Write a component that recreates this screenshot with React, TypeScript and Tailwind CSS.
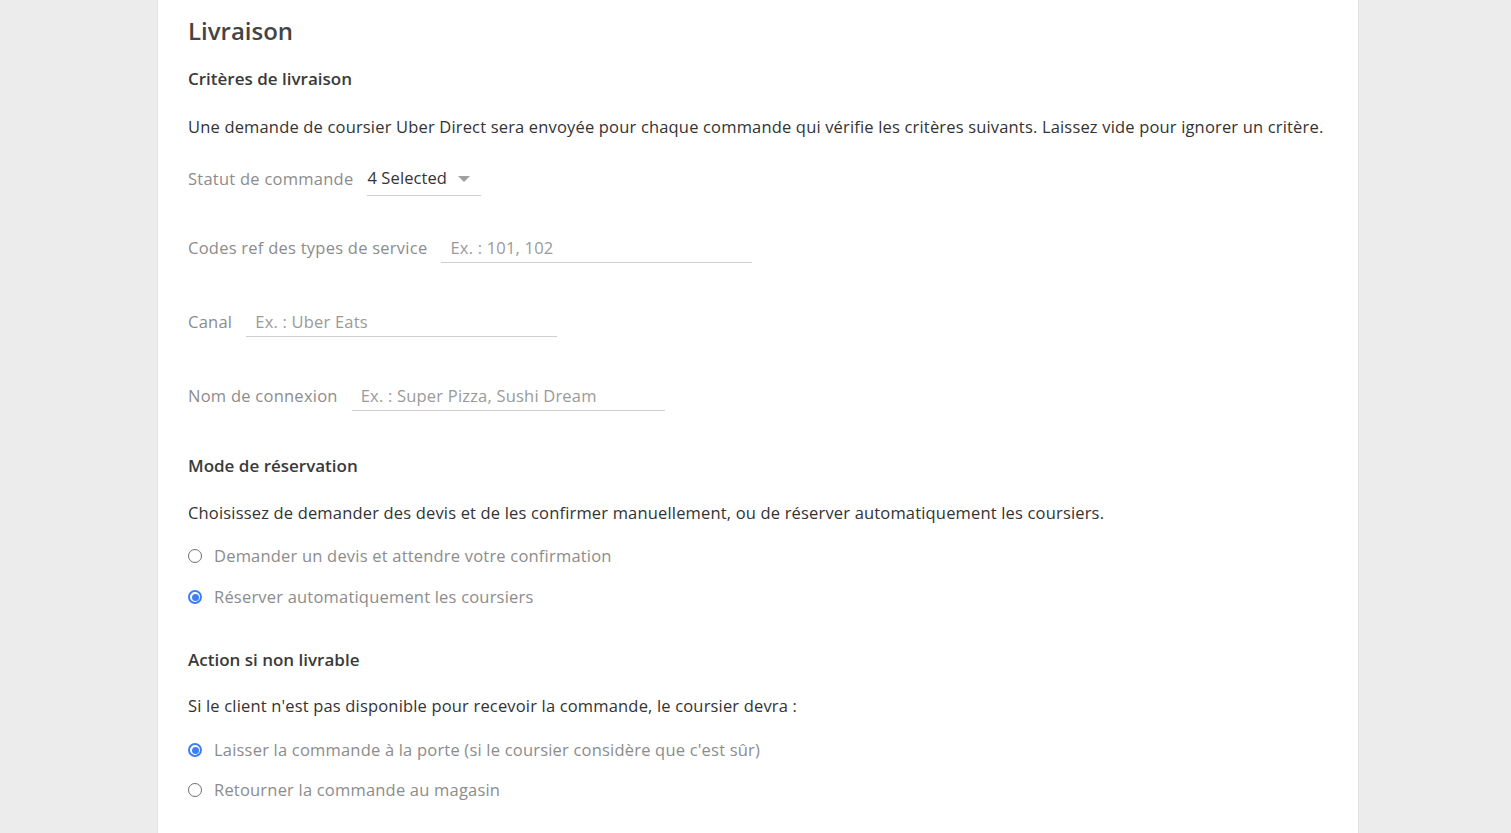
import React from "react";

const font = { fontFamily: '"Open Sans", "Noto Sans", sans-serif' };

function Radio({ checked, label }: { checked: boolean; label: string }) {
  return (
    <label className="flex items-center gap-[12px] text-[16.5px] tracking-[0.2px] text-[#8c8c8c] leading-[24px]">
      {checked ? (
        <span className="w-[14px] h-[14px] rounded-full border-2 border-[#3d7ef5] flex items-center justify-center shrink-0">
          <span className="w-[7px] h-[7px] rounded-full bg-[#3d7ef5]" />
        </span>
      ) : (
        <span className="w-[14px] h-[14px] rounded-full border border-[#6f6f6f] shrink-0" />
      )}
      <span>{label}</span>
    </label>
  );
}

function Field({ label, placeholder, width }: { label: string; placeholder: string; width: string }) {
  return (
    <div className="flex items-center gap-[14px] h-[30px]">
      <span className="text-[16.5px] tracking-[0.25px] text-[#8c8c8c]">{label}</span>
      <div className={`${width} h-[30px] border-b border-[#cfcfcf] flex items-center pt-[2px] px-[9px] text-[16.5px] tracking-[0.2px] text-[#9a9a9a]`}>
        {placeholder}
      </div>
    </div>
  );
}

export default function App() {
  return (
    <div className="min-h-[833px] bg-[#ececec] flex" style={font}>
      <div className="ml-[157px] w-[1202px] bg-white border-x border-[#e2e2e2] px-[30px] pt-[14px] pb-[30px]">
        <h2 className="text-[24px] font-semibold text-[#444] leading-[34px]">Livraison</h2>
        <h3 className="mt-[19px] text-[17px] font-semibold text-[#3a3a3a] leading-[24px]">Critères de livraison</h3>
        <p className="mt-[24px] text-[16.5px] tracking-[0.17px] text-[#333] leading-[24px] whitespace-nowrap">
          Une demande de coursier Uber Direct sera envoyée pour chaque commande qui vérifie les critères suivants. Laissez vide pour ignorer un critère.
        </p>
        <div className="mt-[25px] flex items-center gap-[14px] h-[30px]">
          <span className="text-[16.5px] tracking-[0.25px] text-[#8c8c8c]">Statut de commande</span>
          <div className="w-[114px] h-[34px] border-b border-[#cfcfcf] flex items-center justify-between pr-[11px] text-[16.5px] tracking-[0.1px] text-[#333]">
            <span>4 Selected</span>
            <span className="w-0 h-0 border-l-[6px] border-r-[6px] border-t-[6px] border-l-transparent border-r-transparent border-t-[#a0a0a0]" />
          </div>
        </div>
        <div className="mt-[39px] flex flex-col gap-[44px]">
          <Field label="Codes ref des types de service" placeholder="Ex. : 101, 102" width="w-[311px]" />
          <Field label="Canal" placeholder="Ex. : Uber Eats" width="w-[311px]" />
          <Field label="Nom de connexion" placeholder="Ex. : Super Pizza, Sushi Dream" width="w-[313px]" />
        </div>
        <h3 className="mt-[43px] text-[17px] font-semibold text-[#3a3a3a] leading-[24px]">Mode de réservation</h3>
        <p className="mt-[23px] text-[16.5px] tracking-[0.17px] text-[#333] leading-[24px]">
          Choisissez de demander des devis et de les confirmer manuellement, ou de réserver automatiquement les coursiers.
        </p>
        <div className="mt-[19px] flex flex-col gap-[17px]">
          <Radio checked={false} label="Demander un devis et attendre votre confirmation" />
          <Radio checked={true} label="Réserver automatiquement les coursiers" />
        </div>
        <h3 className="mt-[39px] text-[17px] font-semibold text-[#3a3a3a] leading-[24px]">Action si non livrable</h3>
        <p className="mt-[22px] text-[16.5px] tracking-[0.17px] text-[#333] leading-[24px]">
          Si le client n'est pas disponible pour recevoir la commande, le coursier devra :
        </p>
        <div className="mt-[20px] flex flex-col gap-[16px]">
          <Radio checked={true} label="Laisser la commande à la porte (si le coursier considère que c'est sûr)" />
          <Radio checked={false} label="Retourner la commande au magasin" />
        </div>
      </div>
    </div>
  );
}
